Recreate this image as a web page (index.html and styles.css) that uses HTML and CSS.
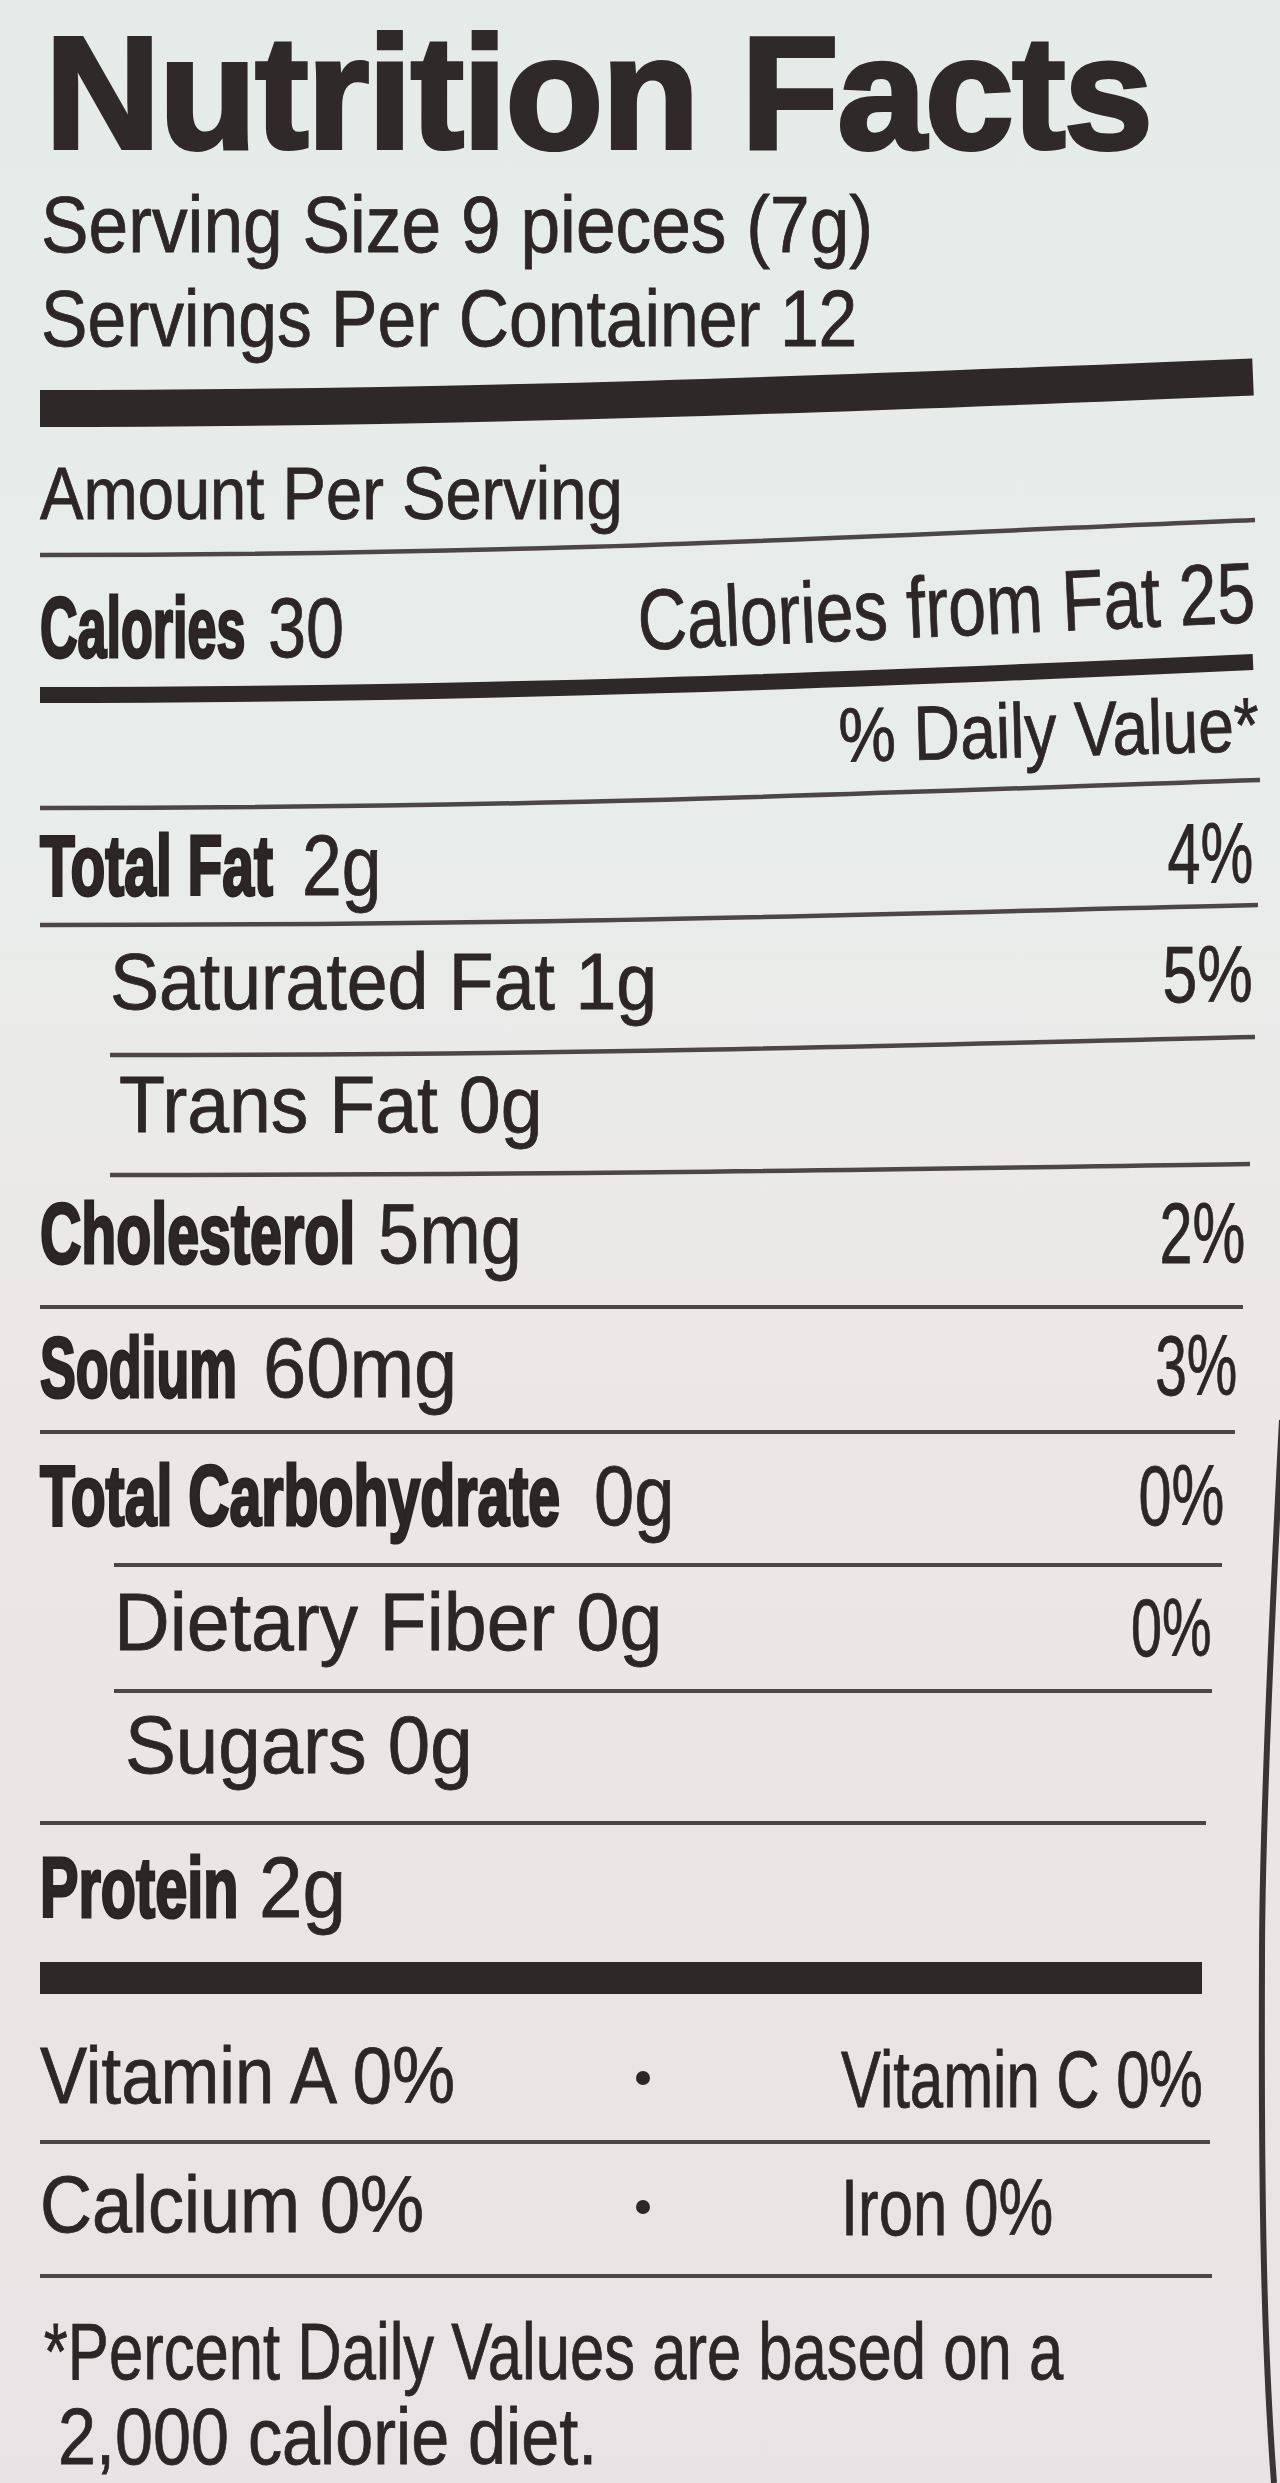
FILE: index.html
```html
<!DOCTYPE html>
<html lang="en">
<head>
<meta charset="utf-8">
<title>Nutrition Facts</title>
<link rel="stylesheet" href="styles.css">
</head>
<body>
<main class="label">
  <h1 class="title">Nutrition Facts</h1>
  <p class="txt serv serv1">Serving Size 9 pieces (7g)</p>
  <p class="txt serv serv2">Servings Per Container 12</p>

  <svg class="rule rule1" width="1213" height="37" viewBox="0 0 1213 37"><path d="M0 18.5 C 420 18.5, 800 4, 1213 -13"/></svg>

  <div class="row row-amount"><span class="txt t-amount">Amount Per Serving</span></div>

  <svg class="rule rule2" width="1215" height="5" viewBox="0 0 1215 5"><path d="M0 2 C 500 2, 800 -16, 1215 -33"/></svg>

  <div class="row row-cal">
    <span class="lbl"><b class="bw bw-cal">Calories</b><span class="val v-cal">30</span></span>
    <span class="txt big right r-cal">Calories from Fat 25</span>
  </div>

  <svg class="rule rule3" width="1213" height="16" viewBox="0 0 1213 16"><path d="M0 8 C 420 8, 800 -6, 1213 -25"/></svg>

  <div class="row row-dv"><span class="txt right r-dv">% Daily Value*</span></div>

  <svg class="rule rule4" width="1220" height="5" viewBox="0 0 1220 5"><path d="M0 2 C 500 2, 800 -12, 1220 -26"/></svg>

  <div class="row row-fat">
    <span class="lbl"><b class="bw bw-fat">Total Fat</b><span class="val v-fat">2g</span></span>
    <span class="txt big right r-fat">4%</span>
  </div>

  <svg class="rule rule5" width="1218" height="5" viewBox="0 0 1218 5"><path d="M0 2 C 500 2, 800 -8, 1218 -18"/></svg>

  <div class="row row-sat">
    <span class="txt t-sat">Saturated Fat 1g</span>
    <span class="txt right r-sat">5%</span>
  </div>

  <svg class="rule rule6" width="1145" height="5" viewBox="0 0 1145 5"><path d="M0 2 C 500 2, 800 -8, 1145 -16"/></svg>

  <div class="row row-trans">
    <span class="txt t-trans">Trans Fat 0g</span>
  </div>

  <svg class="rule rule7" width="1140" height="5" viewBox="0 0 1140 5"><path d="M0 2 C 500 2, 800 -4, 1140 -9"/></svg>

  <div class="row row-chol">
    <span class="lbl"><b class="bw bw-chol">Cholesterol</b><span class="val v-chol">5mg</span></span>
    <span class="txt big right r-chol">2%</span>
  </div>

  <div class="line line8"></div>

  <div class="row row-sod">
    <span class="lbl"><b class="bw bw-sod">Sodium</b><span class="val v-sod">60mg</span></span>
    <span class="txt big right r-sod">3%</span>
  </div>

  <div class="line line9"></div>

  <div class="row row-carb">
    <span class="lbl"><b class="bw bw-carb">Total Carbohydrate</b><span class="val v-carb">0g</span></span>
    <span class="txt big right r-carb">0%</span>
  </div>

  <div class="line line10"></div>

  <div class="row row-fib">
    <span class="txt mid t-fib">Dietary Fiber 0g</span>
    <span class="txt mid right r-fib">0%</span>
  </div>

  <div class="line line11"></div>

  <div class="row row-sug">
    <span class="txt mid t-sug">Sugars 0g</span>
  </div>

  <div class="line line12"></div>

  <div class="row row-pro">
    <span class="lbl"><b class="bw bw-pro">Protein</b><span class="val v-pro">2g</span></span>
  </div>

  <div class="bar bar13"></div>

  <div class="vit vit-a">
    <span class="txt t-vita">Vitamin A 0%</span>
    <span class="dot"></span>
    <span class="vit-r"><span class="txt t-vitc">Vitamin C 0%</span></span>
  </div>

  <div class="line line14"></div>

  <div class="vit vit-b">
    <span class="txt t-calc">Calcium 0%</span>
    <span class="dot"></span>
    <span class="vit-r"><span class="txt t-iron">Iron 0%</span></span>
  </div>

  <div class="line line15"></div>

  <p class="txt foot foot1">*Percent Daily Values are based on a</p>
  <p class="txt foot foot2">2,000 calorie diet.</p>

  <svg class="edge" width="40" height="1083" viewBox="0 0 40 1083"><path d="M42 20 C 30 250, 22 450, 22 560 C 21 800, 24 950, 34 1083"/></svg>
</main>
</body>
</html>
```
FILE: styles.css
```css
html, body {
  margin: 0;
  padding: 0;
}

body {
  width: 1280px;
  min-height: 2483px;
  background: linear-gradient(180deg, #e5ebe9 0%, #e8edeb 30%, #ebe9e8 50%, #ece6e6 62%, #e8e3e4 100%);
  color: #2c2627;
  font-family: "Liberation Sans", Arial, sans-serif;
}

.label {
  position: relative;
  height: 2483px;
  padding-left: 40px;
  box-sizing: border-box;
  overflow: hidden;
}

/* ---------- title ---------- */
.title {
  margin: 13px 0 0 5px;
  font-weight: 700;
  font-size: 160px;
  line-height: 160px;
  height: 160px;
  color: #302929;
  -webkit-text-stroke: 4px #302929;
  letter-spacing: -1.5px;
  white-space: nowrap;
}

/* ---------- generic text ---------- */
.txt {
  display: block;
  margin: 0;
  font-size: 80px;
  line-height: 64px;
  font-weight: 400;
  white-space: nowrap;
  transform-origin: 0 50%;
  -webkit-text-stroke: 0.8px #2c2627;
}

.txt.big { font-size: 86px; }
.txt.mid { font-size: 82px; }

.right {
  margin-left: auto;
  transform-origin: 100% 50%;
}

.lbl {
  display: flex;
  align-items: baseline;
  font-size: 86px;
  line-height: 64px;
  white-space: nowrap;
}

.bw {
  flex: none;
  font-weight: 700;
  transform-origin: 0 50%;
  -webkit-text-stroke: 3px #2a2425;
}

.val {
  display: block;
  transform-origin: 0 50%;
  -webkit-text-stroke: 0.8px #2c2627;
}

/* ---------- header lines ---------- */
.serv { height: 60px; margin-left: 1px; }
.serv1 { margin-top: 20px; transform: scaleX(0.891); }
.serv2 { margin-top: 34px; transform: scaleX(0.87); }

/* ---------- rules ---------- */
.rule {
  display: block;
  overflow: visible;
  fill: none;
}

.rule path {
  stroke: #4d4647;
  stroke-width: 4.5;
}

.rule1 path, .rule3 path { stroke: #2f2829; }

.rule1 { margin-top: 43px; }
.rule1 path { stroke-width: 37; }
.rule2 { margin-top: 31px; }
.rule3 { margin-top: 32px; }
.rule3 path { stroke-width: 16; }
.rule4 { margin-top: 54px; }
.rule5 { margin-top: 30px; }
.rule6 { margin-top: 43px; margin-left: 70px; }
.rule7 { margin-top: 40px; margin-left: 70px; }

.line {
  height: 4px;
  background: #4d4647;
}

.line8 { margin-top: 44px; width: 1203px; }
.line9 { margin-top: 35px; width: 1195px; }
.line10 { margin-top: 40px; margin-left: 74px; width: 1108px; }
.line11 { margin-top: 39px; margin-left: 74px; width: 1098px; }
.line12 { margin-top: 48px; width: 1166px; }
.line14 { margin-top: 36px; width: 1170px; }
.line15 { margin-top: 41px; width: 1172px; }

.bar { background: #2f2829; }

.bar13 {
  margin-top: 47px;
  height: 32px;
  width: 1162px;
}

/* ---------- rows ---------- */
.row {
  display: flex;
  align-items: flex-start;
  height: 60px;
}

.row-amount { margin-top: 35px; }
.t-amount { font-size: 74px; transform: scaleX(0.88); }

.row-cal { margin-top: 37px; margin-right: 24px; }
.bw-cal { width: 228px; transform: scaleX(0.605); }
.v-cal { transform: scaleX(0.795); }
.r-cal {
  margin-top: -35px;
  transform-origin: 100% 62px;
  transform: rotate(-2.6deg) scaleX(0.793);
}

.row-dv { margin-top: -11px; margin-right: 20px; }
.r-dv {
  font-size: 77px;
  transform-origin: 100% 59px;
  transform: rotate(-1.5deg) scaleX(0.835);
}

.row-fat { margin-top: 22px; margin-right: 27px; }
.bw-fat { width: 262px; transform: scaleX(0.662); }
.v-fat { transform: scaleX(0.83); }
.r-fat { margin-top: -12px; transform: scaleX(0.69); }

.row-sat { margin-top: 22px; margin-right: 27px; padding-left: 70px; }
.t-sat { transform: scaleX(0.918); }
.r-sat { margin-top: -7px; transform: scaleX(0.78); }

.row-trans { margin-top: 15px; padding-left: 79px; }
.t-trans { transform: scaleX(0.94); }

.row-chol { margin-top: 23px; margin-right: 35px; }
.bw-chol { width: 338px; transform: scaleX(0.666); }
.v-chol { transform: scaleX(0.86); }
.r-chol { transform: scaleX(0.69); }

.row-sod { margin-top: 26px; margin-right: 43px; }
.bw-sod { width: 223px; transform: scaleX(0.625); }
.v-sod { transform: scaleX(0.903); }
.r-sod { margin-top: -2px; transform: scaleX(0.66); }

.row-carb { margin-top: 29px; margin-right: 56px; }
.bw-carb { width: 554px; transform: scaleX(0.665); }
.v-carb { transform: scaleX(0.84); }
.r-carb { transform: scaleX(0.69); }

.row-fib { margin-top: 23px; margin-right: 68px; padding-left: 74px; }
.t-fib { transform: scaleX(0.94); }
.r-fib { margin-top: 6px; transform: scaleX(0.68); }

.row-sug { margin-top: 20px; padding-left: 85px; }
.t-sug { transform: scaleX(0.93); }

.row-pro { margin-top: 30px; }
.bw-pro { width: 219px; transform: scaleX(0.67); }
.v-pro { transform: scaleX(0.91); }

/* ---------- vitamins ---------- */
.vit {
  display: grid;
  grid-template-columns: 565px 76px minmax(0, 1fr);
  align-items: start;
  height: 60px;
}

.vit-a { margin-top: 50px; }
.vit-b { margin-top: 29px; }

.vit-r { padding-left: 160px; }

.t-vita { transform: scaleX(0.883); }
.t-vitc { margin-top: 4px; transform: scaleX(0.749); }
.t-calc { transform: scaleX(0.90); }
.t-iron { margin-top: 3px; transform: scaleX(0.77); }

.dot {
  justify-self: center;
  width: 14px;
  height: 14px;
  margin-top: 27px;
  border-radius: 50%;
  background: #2c2627;
}

/* ---------- footnote ---------- */
.foot { height: 60px; }
.foot1 { margin-top: 42px; padding-left: 5px; transform: scaleX(0.77); }
.foot2 { margin-top: 25px; padding-left: 21px; transform: scaleX(0.854); }

/* ---------- package edge ---------- */
.edge {
  position: absolute;
  left: 1240px;
  top: 1400px;
  overflow: visible;
  fill: none;
}

.edge path {
  stroke: #3a3435;
  stroke-width: 6;
}
```
